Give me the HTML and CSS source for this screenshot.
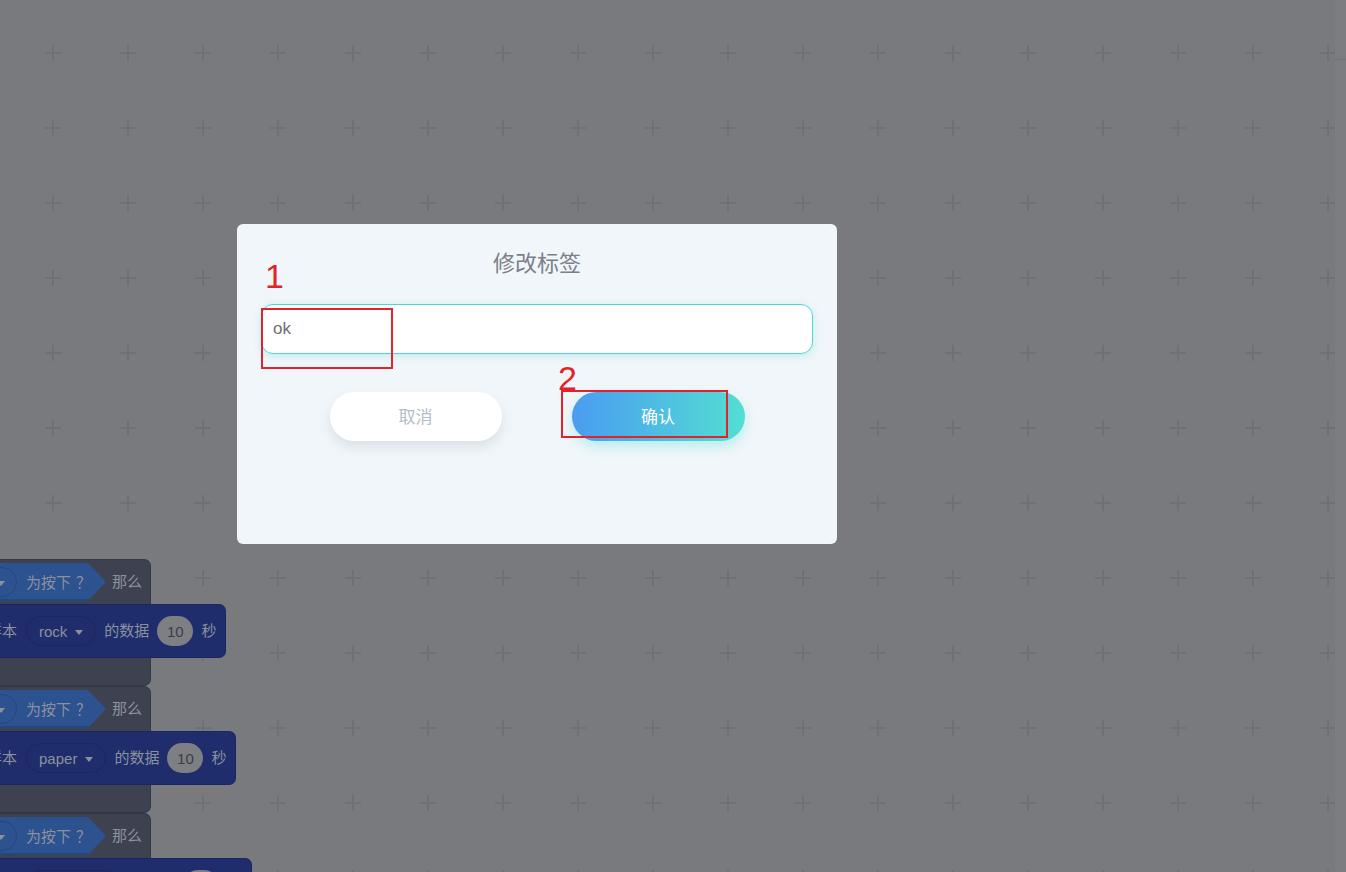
FILE: index.html
```html
<!DOCTYPE html>
<html lang="zh-CN">
<head>
<meta charset="utf-8">
<title>修改标签</title>
<link rel="stylesheet" href="styles.css">
</head>
<body>
<div class="workspace">
  <svg class="grid" xmlns="http://www.w3.org/2000/svg" width="1346" height="872">
    <defs>
      <pattern id="cross" patternUnits="userSpaceOnUse" x="16" y="16" width="75" height="75">
        <rect x="29" y="36" width="16" height="2" fill="#6f7073"/>
        <rect x="36" y="29" width="2" height="16" fill="#6f7073"/>
      </pattern>
    </defs>
    <rect width="100%" height="100%" fill="url(#cross)"/>
  </svg>

  <div class="stack">
    <div class="group">
      <div class="ctrl-top">
        <div class="hex">
          <span class="hex-drop"><i class="tri"></i></span>
          <span class="hex-text">为按下<span class="qm">？</span></span>
        </div>
        <span class="label">那么</span>
      </div>
      <div class="stmt">
        <span class="label">样本</span>
        <span class="drop"><span>rock</span><i class="tri"></i></span>
        <span class="label">的数据</span>
        <span class="num">10</span>
        <span class="label">秒</span>
      </div>
      <div class="ctrl-bottom"></div>
    </div>
    <div class="group">
      <div class="ctrl-top">
        <div class="hex">
          <span class="hex-drop"><i class="tri"></i></span>
          <span class="hex-text">为按下<span class="qm">？</span></span>
        </div>
        <span class="label">那么</span>
      </div>
      <div class="stmt">
        <span class="label">样本</span>
        <span class="drop"><span>paper</span><i class="tri"></i></span>
        <span class="label">的数据</span>
        <span class="num">10</span>
        <span class="label">秒</span>
      </div>
      <div class="ctrl-bottom"></div>
    </div>
    <div class="group">
      <div class="ctrl-top">
        <div class="hex">
          <span class="hex-drop"><i class="tri"></i></span>
          <span class="hex-text">为按下<span class="qm">？</span></span>
        </div>
        <span class="label">那么</span>
      </div>
      <div class="stmt">
        <span class="label">样本</span>
        <span class="drop"><span>scissors</span><i class="tri"></i></span>
        <span class="label">的数据</span>
        <span class="num">10</span>
        <span class="label">秒</span>
      </div>
      <div class="ctrl-bottom"></div>
    </div>
  </div>

  <div class="vscroll"></div>
</div>

<div class="modal">
  <div class="dialog">
    <h2 class="title">修改标签</h2>
    <div class="field">ok</div>
    <div class="actions">
      <button class="btn cancel">取消</button>
      <button class="btn confirm">确认</button>
    </div>
    <div class="mark-box box-1"></div>
    <div class="mark-num num-1">1</div>
    <div class="mark-box box-2"></div>
    <div class="mark-num num-2">2</div>
  </div>
</div>
</body>
</html>
```

FILE: styles.css
```css
html, body {
  margin: 0;
  padding: 0;
}

body {
  width: 1346px;
  height: 872px;
  overflow: hidden;
  background: #797a7d;
  font-family: "Liberation Sans", "Noto Sans CJK SC", sans-serif;
}

.workspace {
  position: relative;
  width: 100%;
  height: 100%;
  overflow: hidden;
}

.grid {
  position: absolute;
  left: 0;
  top: 0;
}

/* block stack on the canvas */
.stack {
  position: absolute;
  left: -40px;
  top: 559px;
  display: flex;
  flex-direction: column;
  align-items: flex-start;
}

.group {
  display: flex;
  flex-direction: column;
  align-items: flex-start;
}

.label {
  color: #8b919c;
  font-size: 15px;
  font-family: "Noto Sans CJK SC", sans-serif;
  white-space: nowrap;
  line-height: 20px;
  margin-top: -2px;
}

.tri {
  display: block;
  width: 0;
  height: 0;
  border-left: 4px solid transparent;
  border-right: 4px solid transparent;
  border-top: 5px solid #8b919c;
  margin-top: 2px;
}

.ctrl-top {
  box-sizing: border-box;
  width: 191px;
  height: 45px;
  background: #3d4150;
  border: 1px solid #343845;
  border-left: none;
  border-bottom: none;
  border-radius: 0 7px 0 0;
  display: flex;
  align-items: center;
  gap: 6px;
}

.hex {
  box-sizing: border-box;
  width: 146px;
  height: 38px;
  background: #2c5290;
  box-shadow: inset 0 -2px 0 #25477f;
  clip-path: polygon(0 0, calc(100% - 18px) 0, 100% 50%, calc(100% - 18px) 100%, 0 100%);
  display: flex;
  align-items: center;
}

.hex-drop {
  box-sizing: border-box;
  width: 52px;
  height: 30px;
  margin-left: 5px;
  border: 1px solid #254780;
  border-radius: 15px;
  display: flex;
  align-items: center;
  justify-content: flex-end;
  padding-right: 11px;
}

.hex-text {
  margin-left: 9px;
  margin-top: -2px;
  color: #8b919c;
  font-size: 15px;
  font-family: "Noto Sans CJK SC", sans-serif;
  white-space: nowrap;
}

.qm {
  margin-left: 5px;
}

.stmt {
  box-sizing: border-box;
  height: 54px;
  background: #1f2d6c;
  border: 1px solid #1a2661;
  border-left: none;
  border-radius: 0 7px 7px 0;
  display: flex;
  align-items: center;
  gap: 8px;
  padding: 0 9px 0 27px;
}

.drop {
  box-sizing: border-box;
  height: 30px;
  border: 1px solid #1a275f;
  border-radius: 15px;
  padding: 0 12px 0 12px;
  margin-left: 1px;
  display: flex;
  align-items: center;
  gap: 8px;
  color: #8b919c;
  font-size: 15px;
}

.num {
  width: 36px;
  height: 30px;
  border-radius: 15px;
  background: #7e7f83;
  color: #3b3d44;
  font-size: 15px;
  display: flex;
  align-items: center;
  justify-content: center;
}

.ctrl-bottom {
  box-sizing: border-box;
  width: 191px;
  height: 28px;
  background: #3d4150;
  border: 1px solid #343845;
  border-left: none;
  border-top: none;
  border-radius: 0 0 7px 0;
}

.vscroll {
  position: absolute;
  top: 0;
  right: 0;
  width: 11px;
  height: 100%;
  background: #7c7d80;
}

.vscroll::before {
  content: "";
  display: block;
  margin-top: 59px;
  height: 1px;
  background: #707174;
}

/* modal */
.modal {
  position: fixed;
  left: 237px;
  top: 224px;
}

.dialog {
  position: relative;
  box-sizing: border-box;
  width: 600px;
  height: 320px;
  padding: 22px 24px;
  background: #f1f6fa;
  border-radius: 6px;
  font-family: "Noto Sans CJK SC", sans-serif;
}

.title {
  margin: 0;
  font-size: 22px;
  line-height: 30px;
  font-weight: normal;
  text-align: center;
  color: #7b8089;
}

.field {
  box-sizing: border-box;
  margin-top: 28px;
  height: 50px;
  border: 1px solid #4fd6d2;
  border-radius: 12px;
  background: #fff;
  box-shadow: 0 2px 8px rgba(79, 214, 210, 0.3);
  padding-left: 11px;
  display: flex;
  align-items: center;
  font-family: "Liberation Sans", "Noto Sans CJK SC", sans-serif;
  font-size: 17px;
  color: #6b6e75;
}

.actions {
  margin-top: 38px;
  display: flex;
  justify-content: center;
  gap: 70px;
}

.btn {
  width: 172px;
  height: 49px;
  border: none;
  border-radius: 25px;
  font-family: "Noto Sans CJK SC", sans-serif;
  font-size: 17px;
  padding: 0 0 2px 0;
}

.cancel {
  background: #fff;
  color: #b3bcc5;
  box-shadow: 0 6px 12px rgba(140, 150, 165, 0.22);
}

.confirm {
  width: 173px;
  background: linear-gradient(90deg, #4a9cf1, #52dfd3);
  color: #fff;
  box-shadow: 0 6px 12px rgba(82, 223, 211, 0.35);
}

/* annotation marks */
.mark-box {
  position: absolute;
  box-sizing: border-box;
  border: 2px solid #e3232b;
}

.box-1 {
  left: 24px;
  top: 84px;
  width: 132px;
  height: 61px;
}

.box-2 {
  left: 324px;
  top: 166px;
  width: 167px;
  height: 48px;
}

.mark-num {
  position: absolute;
  color: #e3232b;
  font-family: "Liberation Sans", sans-serif;
  font-size: 34px;
  line-height: 34px;
}

.num-1 {
  left: 28px;
  top: 35px;
}

.num-2 {
  left: 321px;
  top: 137px;
}
```
